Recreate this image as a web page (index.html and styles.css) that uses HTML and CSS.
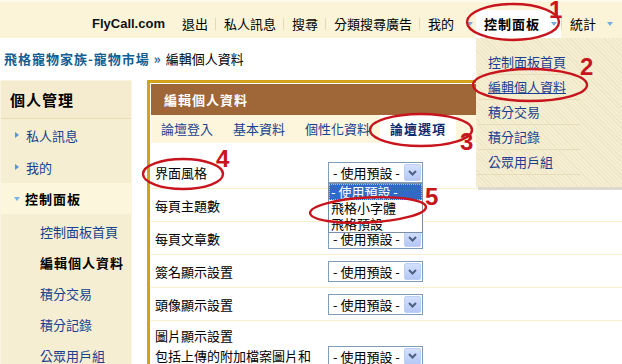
FILE: index.html
```html
<!DOCTYPE html>
<html lang="zh-Hant">
<head>
<meta charset="utf-8">
<title>編輯個人資料</title>
<link rel="stylesheet" href="styles.css">
</head>
<body>
<header class="topbar">
  <nav class="nav">
    <span class="brand">FlyCall.com</span>
    <a class="nav-link">退出</a>
    <span class="sep"></span>
    <a class="nav-link">私人訊息</a>
    <span class="sep"></span>
    <a class="nav-link">搜尋</a>
    <span class="sep"></span>
    <a class="nav-link">分類搜尋廣告</a>
    <span class="sep"></span>
    <a class="nav-link mine">我的<i class="tri-down"></i></a>
    <div class="nav-link active">控制面板<i class="tri-down"></i>
      <ul class="dropmenu">
        <li><a>控制面板首頁</a></li>
        <li><a class="current">編輯個人資料</a></li>
        <li><a>積分交易</a></li>
        <li><a>積分記錄</a></li>
        <li><a>公眾用戶組</a></li>
      </ul>
    </div>
    <span class="sep"></span>
    <a class="nav-link stats">統計<i class="tri-down"></i></a>
  </nav>
</header>

<div class="crumb"><a>飛格寵物家族-寵物市場</a><span class="raquo">»</span>編輯個人資料</div>

<div class="layout">
  <aside class="sidebar">
    <div class="side-head">個人管理</div>
    <ul class="side-nav">
      <li><i class="tri-right"></i><a>私人訊息</a></li>
      <li><i class="tri-right"></i><a>我的</a></li>
      <li class="open"><i class="tri-open"></i>控制面板</li>
    </ul>
    <ul class="side-sub">
      <li><a>控制面板首頁</a></li>
      <li class="current">編輯個人資料</li>
      <li><a>積分交易</a></li>
      <li><a>積分記錄</a></li>
      <li><a>公眾用戶組</a></li>
    </ul>
  </aside>

  <section class="main">
    <div class="main-head">編輯個人資料</div>
    <div class="tabs">
      <a class="tab">論壇登入</a>
      <a class="tab">基本資料</a>
      <a class="tab">個性化資料</a>
      <a class="tab on">論壇選項</a>
    </div>
    <div class="form">
      <div class="form-row">
        <div class="label">界面風格</div>
        <div class="select">
          <span class="val">- 使用預設 -</span><span class="btn"><svg width="9" height="6" viewBox="0 0 9 6"><path d="M1 1 L4.5 4.5 L8 1" fill="none" stroke="#4d6185" stroke-width="2"/></svg></span>
          <ul class="options">
            <li class="hl">- 使用預設 -</li>
            <li>飛格小字體</li>
            <li>飛格預設</li>
          </ul>
        </div>
      </div>
      <div class="form-row">
        <div class="label">每頁主題數</div>
        <div class="select"><span class="val">- 使用預設 -</span><span class="btn"><svg width="9" height="6" viewBox="0 0 9 6"><path d="M1 1 L4.5 4.5 L8 1" fill="none" stroke="#4d6185" stroke-width="2"/></svg></span></div>
      </div>
      <div class="form-row">
        <div class="label">每頁文章數</div>
        <div class="select"><span class="val">- 使用預設 -</span><span class="btn"><svg width="9" height="6" viewBox="0 0 9 6"><path d="M1 1 L4.5 4.5 L8 1" fill="none" stroke="#4d6185" stroke-width="2"/></svg></span></div>
      </div>
      <div class="form-row">
        <div class="label">簽名顯示設置</div>
        <div class="select"><span class="val">- 使用預設 -</span><span class="btn"><svg width="9" height="6" viewBox="0 0 9 6"><path d="M1 1 L4.5 4.5 L8 1" fill="none" stroke="#4d6185" stroke-width="2"/></svg></span></div>
      </div>
      <div class="form-row">
        <div class="label">頭像顯示設置</div>
        <div class="select"><span class="val">- 使用預設 -</span><span class="btn"><svg width="9" height="6" viewBox="0 0 9 6"><path d="M1 1 L4.5 4.5 L8 1" fill="none" stroke="#4d6185" stroke-width="2"/></svg></span></div>
      </div>
      <div class="form-row">
        <div class="label">圖片顯示設置<br>包括上傳的附加檔案圖片和<br>[img] 代碼圖片</div>
        <div class="select"><span class="val">- 使用預設 -</span><span class="btn"><svg width="9" height="6" viewBox="0 0 9 6"><path d="M1 1 L4.5 4.5 L8 1" fill="none" stroke="#4d6185" stroke-width="2"/></svg></span></div>
      </div>
    </div>
  </section>
</div>

<svg class="marks" width="622" height="364" viewBox="0 0 622 364">
  <g fill="none" stroke="#c8141c" stroke-width="2.4">
    <ellipse cx="513" cy="22" rx="46" ry="18"/>
    <ellipse cx="530" cy="85" rx="57" ry="16"/>
    <ellipse cx="421" cy="130" rx="51" ry="16"/>
    <ellipse cx="183" cy="174" rx="40" ry="15"/>
    <ellipse cx="368" cy="210" rx="58" ry="12.5" transform="rotate(-3 368 210)"/>
  </g>
  <g class="num" fill="#c8141c">
    <text x="549" y="18">1</text>
    <text x="580" y="75">2</text>
    <text x="460" y="150">3</text>
    <text x="216" y="167">4</text>
    <text x="425" y="205">5</text>
  </g>
</svg>
</body>
</html>
```
FILE: styles.css
```css
* { box-sizing: border-box; }
html, body {
  margin: 0;
  padding: 0;
  width: 622px;
  height: 364px;
  overflow: hidden;
  background: #fff;
}
body {
  position: relative;
  font-family: "Noto Sans CJK TC", "Noto Sans", sans-serif;
  font-size: 13px;
  color: #000;
}
a { color: inherit; text-decoration: none; }
ul { list-style: none; margin: 0; padding: 0; }

/* top bar */
.topbar {
  height: 38px;
  background: #fcf4d8;
  border-top: 2px solid #fdf9ea;
  display: flex;
  align-items: flex-end;
  padding-left: 92px;
}
.nav { display: flex; height: 28px; align-items: stretch; }
.brand {
  font-family: "Liberation Sans", Arial, sans-serif;
  font-weight: bold;
  font-size: 13px;
  line-height: 28px;
  margin-right: 9px;
  color: #111;
}
.nav-link {
  display: flex;
  align-items: center;
  padding: 0 7px 0 8px;
  line-height: 28px;
  position: relative;
  white-space: nowrap;
}
.sep { width: 1px; height: 12px; background: #e3d9b3; align-self: center; }
.tri-down {
  display: block;
  width: 0; height: 0;
  border-left: 3.5px solid transparent;
  border-right: 3.5px solid transparent;
  border-top: 4px solid #78acdf;
}
.mine { padding-right: 3px; }
.mine .tri-down { margin-left: 13px; }
.active {
  background: #fff;
  font-weight: bold;
  letter-spacing: 1px;
  padding-right: 4px;
}
.active .tri-down { margin-left: 11px; }
.stats { padding-right: 5px; }
.stats .tri-down { margin-left: 11px; }

.dropmenu {
  position: absolute;
  top: 100%;
  left: 0;
  width: 150px;
  padding: 12px 0 12px 2px;
  background-color: #f5eed3;
  background-image: repeating-linear-gradient(45deg, rgba(220,205,160,0.25) 0 1px, transparent 1px 3px);
  box-shadow: 2px 3px 0 #dcd9cf;
  z-index: 5;
  font-weight: normal;
  letter-spacing: 0;
}
.dropmenu a {
  display: block;
  width: 102px;
  height: 25px;
  line-height: 24px;
  padding-left: 10px;
  border-bottom: 1px solid #e6dcb9;
  color: #1c3e90;
}
.dropmenu a.current { text-decoration: underline; }

/* breadcrumb */
.crumb {
  margin-top: 11px;
  padding-left: 4px;
  height: 20px;
  line-height: 20px;
  white-space: nowrap;
}
.crumb a { color: #125d92; font-weight: bold; letter-spacing: 1px; }
.crumb .raquo { color: #125d92; font-weight: bold; margin: 0 5px 0 4px; }

/* layout */
.layout { display: flex; align-items: flex-start; margin-top: 11px; }

.sidebar {
  flex: 0 0 132px;
  width: 132px;
  background: #f6eed3;
  border: 1px solid #faf5e2;
  height: 300px;
}
.side-head {
  height: 38px;
  line-height: 37px;
  padding-left: 9px;
  font-size: 15px;
  font-weight: bold;
  letter-spacing: 1px;
  background: #f5ecd0;
  border-bottom: 1px solid #e7dcb2;
}
.side-nav li {
  display: flex;
  align-items: center;
  height: 32px;
  padding-left: 14px;
  color: #17408f;
}
.tri-right {
  display: block;
  width: 0; height: 0;
  border-top: 3.5px solid transparent;
  border-bottom: 3.5px solid transparent;
  border-left: 4px solid #5b93d6;
  margin-right: 7px;
}
.side-nav li.open {
  height: 31px;
  background: #fcf6dc;
  color: #000;
  font-weight: bold;
  letter-spacing: 1px;
  padding-left: 13px;
}
.tri-open {
  display: block;
  width: 0; height: 0;
  border-left: 3.5px solid transparent;
  border-right: 3.5px solid transparent;
  border-top: 4px solid #7ab2e0;
  margin-right: 5px;
}
.side-sub { padding-top: 2px; }
.side-sub li {
  height: 31px;
  line-height: 31px;
  padding-left: 39px;
  color: #17408f;
}
.side-sub li.current { color: #000; font-weight: bold; letter-spacing: 1px; }

/* main panel */
.main {
  flex: 0 0 520px;
  margin-left: 15px;
  border: 3px solid #d4a11c;
  padding: 1px;
  height: 320px;
}
.main-head {
  height: 31px;
  line-height: 31px;
  background: #9f6738;
  color: #fff;
  font-weight: bold;
  letter-spacing: 1px;
  padding-left: 13px;
}
.tabs { display: flex; height: 28px; background: #fdf6dc; }
.tab { padding: 0 10px; line-height: 28px; color: #17408f; }
.tab.on { background: #fff; color: #0c2b70; font-weight: bold; letter-spacing: 1px; }

.form { margin-top: 13px; }
.form-row {
  display: flex;
  align-items: center;
  padding: 5px 0 4px 4px;
  border-bottom: 1px solid #f8f0cd;
}
.label { flex: 0 0 173px; line-height: 20px; }
.select {
  position: relative;
  width: 95px;
  height: 21px;
  margin: 1px 0;
  border: 1px solid #7f9db9;
  background: #fff;
  display: flex;
  align-items: center;
}
.select .val { flex: 1; padding-left: 4px; line-height: 19px; white-space: nowrap; }
.select .btn {
  width: 17px;
  height: 17px;
  margin-right: 1px;
  border: 1px solid #bccff5;
  border-radius: 2px;
  background: linear-gradient(#d3e0fd, #b5c8f4);
  display: flex;
  align-items: center;
  justify-content: center;
}
.options {
  position: absolute;
  top: calc(100% + 1px);
  left: -1px;
  width: 95px;
  border: 1px solid #7a8fa6;
  background: #fff;
  z-index: 4;
}
.options li { height: 16px; line-height: 16px; padding-left: 2px; white-space: nowrap; }
.options li.hl {
  background: #316ac5;
  color: #fff;
  outline: 1px dotted #e5b866;
  outline-offset: -1px;
}

/* annotations */
.marks {
  position: absolute;
  top: 0;
  left: 0;
  z-index: 10;
  pointer-events: none;
}
.num text {
  font-family: "Liberation Sans", Arial, sans-serif;
  font-weight: bold;
  font-size: 24px;
}
```
